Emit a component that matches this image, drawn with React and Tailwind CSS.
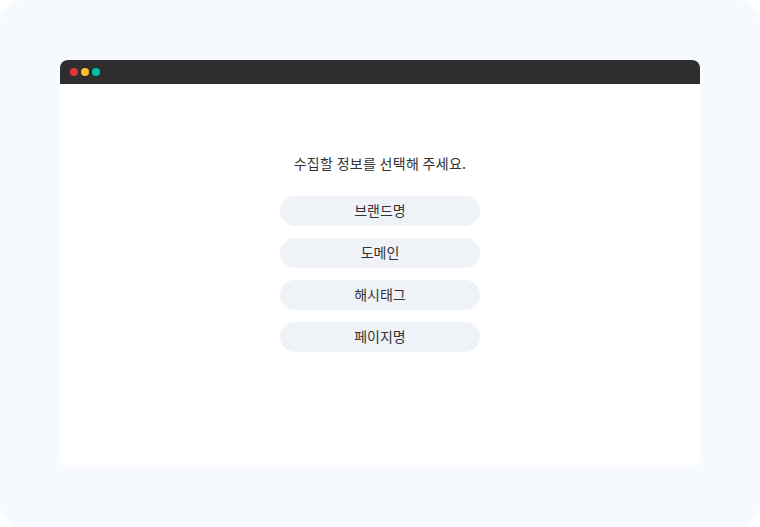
export default function App() {
  const items = ["브랜드명", "도메인", "해시태그", "페이지명"];
  return (
    <div className="w-[760px] h-[527px] bg-[#f6f9fe] rounded-[24px] pt-[60px] px-[60px]" style={{ fontFamily: '"Noto Sans CJK KR", "Noto Sans", sans-serif' }}>
      <div className="w-[640px] h-[407px] bg-white rounded-[8px] overflow-hidden flex flex-col">
        <div className="h-[24px] bg-[#2e2e2e] flex items-center gap-[3px] pl-[10px]">
          <span className="w-[8px] h-[8px] rounded-full bg-[#e53935]" />
          <span className="w-[8px] h-[8px] rounded-full bg-[#fbc02d]" />
          <span className="w-[8px] h-[8px] rounded-full bg-[#00bfa5]" />
        </div>
        <div className="flex flex-col items-center pt-[68px]">
          <p className="text-[14px] leading-[22px] tracking-[0.3px] text-[#333]">수집할 정보를 선택해 주세요.</p>
          <div className="mt-[22px] flex flex-col gap-[12px]">
            {items.map((t) => (
              <div key={t} className="w-[200px] h-[30px] rounded-full bg-[#eff2f7] flex items-center justify-center text-[14px] leading-[20px] pb-[2px] text-[#333]">
                {t}
              </div>
            ))}
          </div>
        </div>
      </div>
    </div>
  );
}
